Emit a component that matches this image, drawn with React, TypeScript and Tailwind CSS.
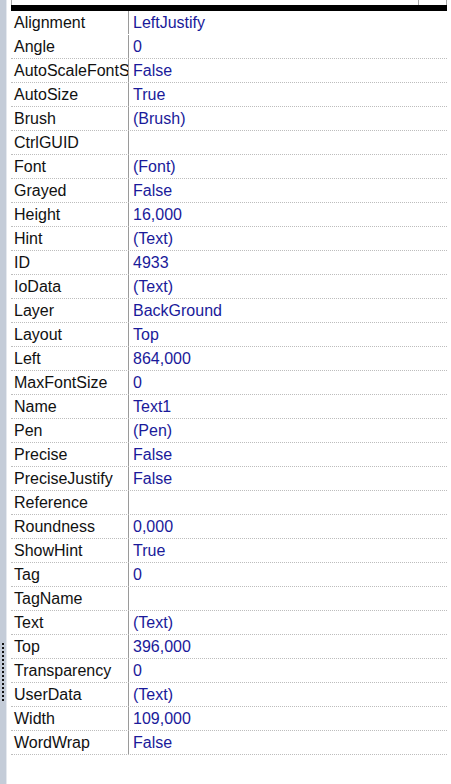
import React from "react";

const rows: [string, string][] = [
  ["Alignment", "LeftJustify"],
  ["Angle", "0"],
  ["AutoScaleFontS", "False"],
  ["AutoSize", "True"],
  ["Brush", "(Brush)"],
  ["CtrlGUID", ""],
  ["Font", "(Font)"],
  ["Grayed", "False"],
  ["Height", "16,000"],
  ["Hint", "(Text)"],
  ["ID", "4933"],
  ["IoData", "(Text)"],
  ["Layer", "BackGround"],
  ["Layout", "Top"],
  ["Left", "864,000"],
  ["MaxFontSize", "0"],
  ["Name", "Text1"],
  ["Pen", "(Pen)"],
  ["Precise", "False"],
  ["PreciseJustify", "False"],
  ["Reference", ""],
  ["Roundness", "0,000"],
  ["ShowHint", "True"],
  ["Tag", "0"],
  ["TagName", ""],
  ["Text", "(Text)"],
  ["Top", "396,000"],
  ["Transparency", "0"],
  ["UserData", "(Text)"],
  ["Width", "109,000"],
  ["WordWrap", "False"],
];

export default function App() {
  return (
    <div
      className="relative flex w-[451px] h-[784px] bg-white overflow-hidden"
      style={{ fontFamily: '"Liberation Sans", Arial, sans-serif' }}
    >
      {/* left splitter strip */}
      <div className="relative w-[7px] h-full bg-[#c4ccd8] border-r border-[#e4e8ee]">
        <div className="absolute left-[2px] top-[643px] h-[58px] w-[2px] border-l-2 border-dotted border-[#111]" />
      </div>
      <div className="ml-[4px] w-[436px] flex flex-col">
        <div className="flex h-[5px]">
          <div className="w-[408px] border-l border-r border-[#a8a8a8]" />
          <div className="w-[28px] border-r border-[#a8a8a8]" />
        </div>
        <div className="h-[6px] bg-black" />
        {rows.map(([name, value], i) => (
          <div
            key={name}
            className={
              "flex h-[24px] text-[16px] leading-none border-b border-dotted " +
              (i === 0 ? "border-transparent" : "border-[#bdbdbd]")
            }
          >
            <div className="w-[118px] shrink-0 pl-[3px] flex items-center overflow-hidden whitespace-nowrap border-r border-[#9a9a9a] text-[#111]">
              {name}
            </div>
            <div className="flex-1 pl-[4px] flex items-center whitespace-nowrap text-[#1a1a9a]">
              {value}
            </div>
          </div>
        ))}
      </div>
    </div>
  );
}
